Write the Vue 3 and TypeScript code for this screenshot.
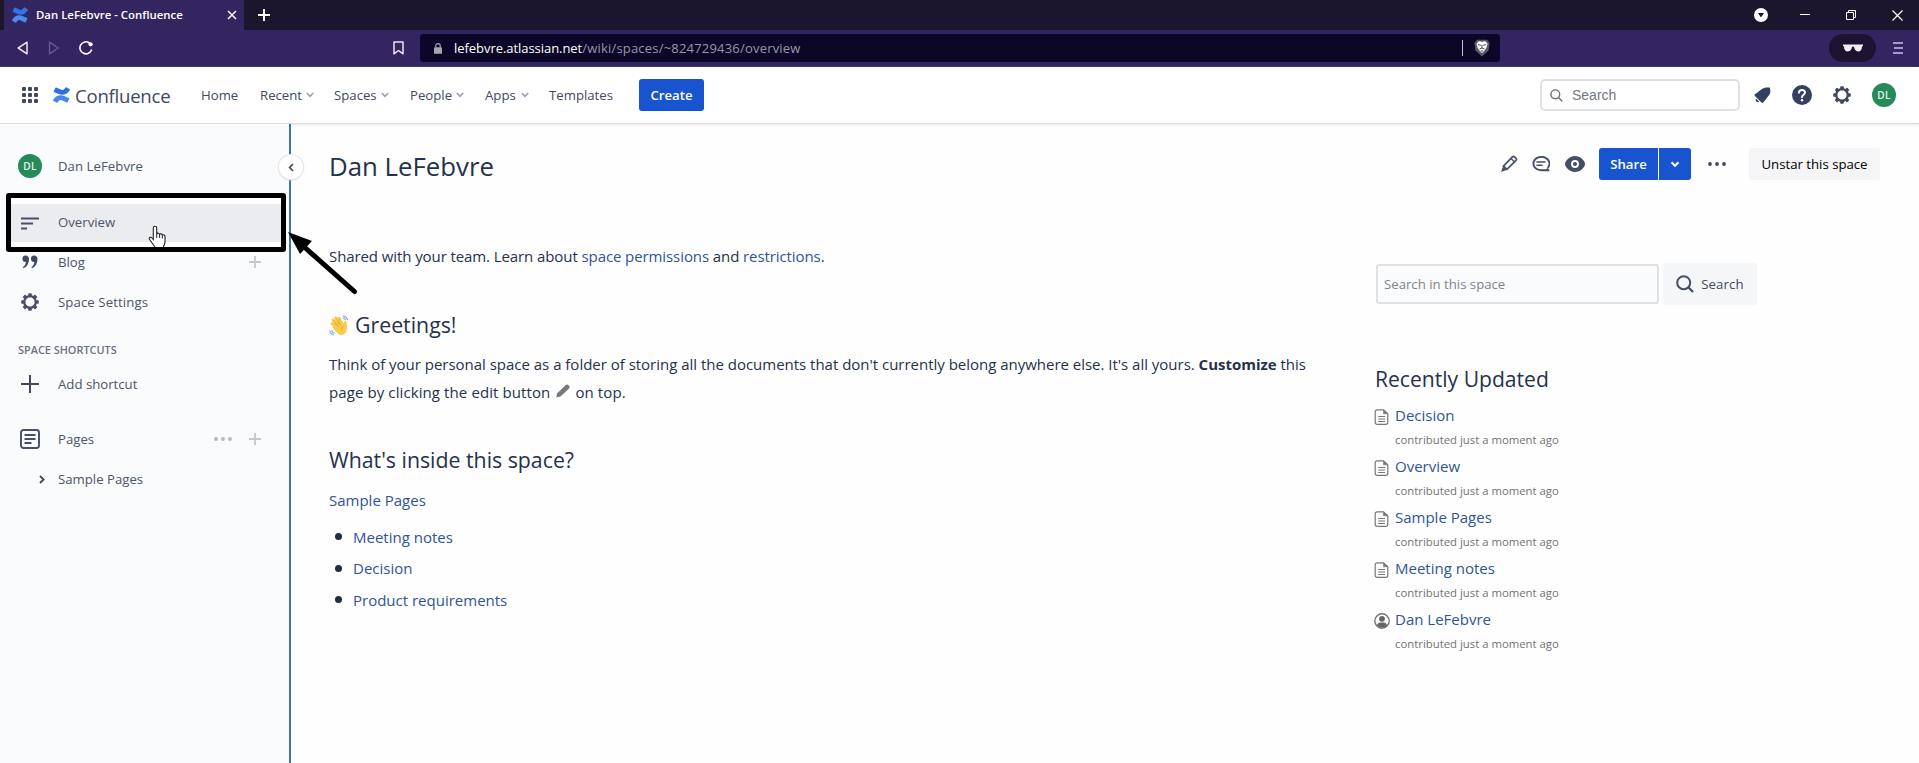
<script setup lang="ts">
interface NavItem { label: string; menu: boolean; cls: string }
interface Update { title: string; kind: 'page' | 'person' }

const nav: NavItem[] = [
  { label: 'Home', menu: false, cls: 'home' },
  { label: 'Recent', menu: true, cls: 'recent' },
  { label: 'Spaces', menu: true, cls: 'spaces' },
  { label: 'People', menu: true, cls: 'people' },
  { label: 'Apps', menu: true, cls: 'apps' },
  { label: 'Templates', menu: false, cls: 'templates' },
]
const pages: string[] = ['Meeting notes', 'Decision', 'Product requirements']
const updates: Update[] = [
  { title: 'Decision', kind: 'page' },
  { title: 'Overview', kind: 'page' },
  { title: 'Sample Pages', kind: 'page' },
  { title: 'Meeting notes', kind: 'page' },
  { title: 'Dan LeFebvre', kind: 'person' },
]
const gearTeeth: number[] = [0, 45, 90, 135, 180, 225, 270, 315]
const gridDots: number[] = [0, 1, 2, 3, 4, 5, 6, 7, 8]
const logoLower = 'M.87 18.257c-.248.382-.53.875-.763 1.245a.764.764 0 0 0 .255 1.04l4.965 3.054a.764.764 0 0 0 1.058-.26c.199-.332.454-.763.733-1.221 1.967-3.247 3.945-2.853 7.508-1.146l4.957 2.337a.764.764 0 0 0 1.028-.382l2.364-5.346a.764.764 0 0 0-.382-1 599.851 599.851 0 0 1-4.965-2.361C10.911 10.97 5.224 11.185.87 18.257z'
const logoUpper = 'M23.131 5.743c.249-.405.531-.875.764-1.25a.764.764 0 0 0-.256-1.034L18.675.404a.764.764 0 0 0-1.058.26c-.195.335-.451.763-.734 1.225-1.966 3.246-3.945 2.85-7.508 1.146L4.437.694a.764.764 0 0 0-1.027.382L1.046 6.422a.764.764 0 0 0 .382 1c1.039.49 3.105 1.467 4.965 2.361 6.698 3.246 12.392 3.029 16.738-4.04z'
</script>

<template>
  <div class="window">
    <header class="tabs">
      <div class="tab">
        <svg class="tab-logo" viewBox="0 0 24 24"><path :d="logoLower" fill="#4a8bf2" /><path :d="logoUpper" fill="#2f74e8" /></svg>
        <span class="tab-title">Dan LeFebvre - Confluence</span>
        <svg class="tab-x" viewBox="0 0 10 10"><path d="M1 1L9 9M9 1L1 9" stroke="#fff" stroke-width="1.500" /></svg>
      </div>
      <svg class="tab-plus" viewBox="0 0 12 12"><path d="M6 0V12M0 6H12" stroke="#fff" stroke-width="2" /></svg>
      <div class="win-ctl">
        <svg width="14" height="14" viewBox="0 0 14 14"><circle cx="7" cy="7" r="7" fill="#fff" /><path d="M4 5H10L7 9.500Z" fill="#1b162e" /></svg>
        <svg width="10" height="10" viewBox="0 0 10 10"><path d="M0 4.500H10" stroke="#fff" /></svg>
        <svg width="10" height="10" viewBox="0 0 10 10"><path d="M.5 2.500H7.500V9.500H.5ZM2.500 2.500V.5H9.500V7.500H7.500" fill="none" stroke="#fff" /></svg>
        <svg width="11" height="11" viewBox="0 0 11 11"><path d="M.5.5L10.500 10.500M10.500.5L.5 10.500" stroke="#fff" stroke-width="1.200" /></svg>
      </div>
    </header>

    <div class="toolbar">
      <svg class="t-back" width="12" height="14" viewBox="0 0 12 14"><path d="M10 1.200V12.800L1.200 7Z" fill="none" stroke="#e9e5f5" stroke-width="1.500" stroke-linejoin="round" /></svg>
      <svg class="t-fwd" width="12" height="14" viewBox="0 0 12 14"><path d="M1.500 1.200V12.800L10.300 7Z" fill="none" stroke="#665a90" stroke-width="1.400" stroke-linejoin="round" /></svg>
      <svg class="t-reload" width="14" height="14" viewBox="0 0 14 14"><path d="M10.500 2A6 6 0 1 0 12.700 8.500" fill="none" stroke="#fff" stroke-width="1.600" /><circle cx="11.600" cy="3.300" r="2.100" fill="#fff" /></svg>
      <svg class="t-mark" width="11" height="14" viewBox="0 0 11 14"><path d="M1 1H10V12.800L5.500 9.500L1 12.800Z" fill="none" stroke="#e9e5f5" stroke-width="1.500" stroke-linejoin="round" /></svg>
      <div class="url">
        <svg class="lock" width="8" height="11" viewBox="0 0 9 12"><rect y="4.500" width="9" height="7.500" rx="1" fill="#a7a5b5" /><path d="M2 5V3A2.500 2.500 0 0 1 7 3V5" fill="none" stroke="#a7a5b5" stroke-width="1.300" /></svg>
        <span class="host">lefebvre.atlassian.net</span><span class="path">/wiki/spaces/~824729436/overview</span>
        <i class="url-div"></i>
        <svg class="brave" width="16" height="18" viewBox="0 0 16 18"><path d="M3 .8H13L15.600 4L14.500 11.500L8 17.600L1.500 11.500L.4 4Z" fill="#5c5866" /><path d="M4 2.800L6 2.300L8 3L10 2.300L12 2.800L13.500 5L12.300 9L10.200 12L8 14L5.800 12L3.700 9L2.500 5Z" fill="#fff" /><path d="M4 5.500L7 6.300M12 5.500L9 6.300M8 6V9M5.500 10L8 9L10.500 10M6.700 12H9.300" stroke="#4b4758" fill="none" /></svg>
      </div>
      <div class="private"><svg width="20" height="8" viewBox="0 0 20 8"><path d="M0 .5H20V2L19 2.500C19 6 17.500 7.500 15 7.500C12.500 7.500 11.500 5.500 11 2.800H9C8.500 5.500 7.500 7.500 5 7.500C2.500 7.500 1 6 1 2.500L0 2Z" fill="#f1eef8" /></svg></div>
      <svg class="burger" width="10" height="12" viewBox="0 0 10 12"><path d="M0 1H10M1 6H10M0 11H10" stroke="#c9c0ee" stroke-width="1.700" /></svg>
    </div>

    <nav class="topnav">
      <div class="grid9"><i v-for="d in gridDots" :key="d"></i></div>
      <svg class="c-logo" viewBox="0 0 24 24" preserveAspectRatio="none"><path :d="logoLower" fill="#4488ee" /><path :d="logoUpper" fill="#2f70dd" /></svg>
      <span class="brand">Confluence</span>
      <div class="links">
        <span v-for="n in nav" :key="n.label" class="nav-item" :class="n.cls">
          <span>{{ n.label }}</span>
          <svg v-if="n.menu" width="8" height="6" viewBox="0 0 8 6"><path d="M.8 1L4 4.400L7.200 1" fill="none" stroke="#9aa0ac" stroke-width="1.600" /></svg>
        </span>
      </div>
      <button class="create">Create</button>
      <div class="nav-search">
        <svg width="13" height="13" viewBox="0 0 13 13"><circle cx="5.300" cy="5.300" r="4.400" fill="none" stroke="#6b7078" stroke-width="1.400" /><path d="M8.500 8.500L12.200 12.200" stroke="#6b7078" stroke-width="1.500" /></svg>
        <span>Search</span>
      </div>
      <svg class="bell" width="17" height="17" viewBox="0 0 17 17"><path d="M15.800.6C16.600 3 16.800 6.500 15 8.300L9.300 15.600C8.600 16.300 8 16.100 7.500 15.600L.9 9C.4 8.400.4 7.800 1 7.300L8.300 1.700C10.500.3 13.300.2 15.800.6Z" fill="#344060" /><path d="M2 11.500A2.400 2.400 0 0 0 5.300 14.800Z" fill="#344060" /></svg>
      <svg class="help" width="20" height="20" viewBox="0 0 20 20"><circle cx="10" cy="10" r="10" fill="#344060" /><path d="M7 7.800C7 4 13 4.200 13 7.600C13 9.800 10 9.700 10 12.200" fill="none" stroke="#fff" stroke-width="1.900" stroke-linecap="round" /><circle cx="10" cy="15.200" r="1.200" fill="#fff" /></svg>
      <svg class="gear" width="18" height="18" viewBox="0 0 18 18"><g fill="#42495c"><rect v-for="a in gearTeeth" :key="a" x="7.200" y=".2" width="3.600" height="4" rx=".8" :transform="`rotate(${a} 9 9)`" /></g><circle cx="9" cy="9" r="5.800" fill="none" stroke="#42495c" stroke-width="2.200" /></svg>
      <span class="avatar">DL</span>
    </nav>

    <div class="body">
      <aside class="side">
        <div class="s-row s-user"><span class="s-ico"><span class="avatar">DL</span></span><span class="lbl name">Dan LeFebvre</span></div>
        <div class="s-row s-over">
          <span class="s-ico"><svg width="18" height="13" viewBox="0 0 18 13"><path d="M0 1.500H18M0 6.500H12M0 11.500H6" stroke="#484f66" stroke-width="2" /></svg></span>
          <span class="lbl">Overview</span>
        </div>
        <div class="s-row s-blog">
          <span class="s-ico"><svg width="16" height="14" viewBox="0 0 16 14"><path d="M3.500.5A3.300 3.300 0 0 1 7 4C7 8.500 5 11.500 1.700 13.300L.8 12.300C2.700 11 3.700 9 3.900 7A3.250 3.250 0 1 1 3.500.5Z" fill="#42495f" /><path d="M12 .5A3.300 3.300 0 0 1 15.500 4C15.500 8.500 13.500 11.500 10.200 13.300L9.300 12.300C11.200 11 12.200 9 12.400 7A3.250 3.250 0 1 1 12 .5Z" fill="#42495f" /></svg></span>
          <span class="lbl">Blog</span>
          <svg class="add" width="12" height="12" viewBox="0 0 12 12"><path d="M6 0V12M0 6H12" stroke="#c3c6cc" stroke-width="1.800" /></svg>
        </div>
        <div class="s-row">
          <span class="s-ico"><svg width="18" height="18" viewBox="0 0 18 18"><g fill="#484f66"><rect v-for="a in gearTeeth" :key="a" x="7.200" y=".2" width="3.600" height="4" rx=".8" :transform="`rotate(${a} 9 9)`" /></g><circle cx="9" cy="9" r="5.800" fill="none" stroke="#484f66" stroke-width="2.200" /></svg></span>
          <span class="lbl settings">Space Settings</span>
        </div>
        <div class="s-head">SPACE SHORTCUTS</div>
        <div class="s-row s-add">
          <span class="s-ico"><svg width="18" height="18" viewBox="0 0 18 18"><path d="M9 0V18M0 9H18" stroke="#42495a" stroke-width="2" /></svg></span>
          <span class="lbl">Add shortcut</span>
        </div>
        <div class="s-row s-pages">
          <span class="s-ico"><svg width="20" height="20" viewBox="0 0 20 20"><rect x="1" y="1" width="18" height="18" rx="2.500" fill="none" stroke="#484f66" stroke-width="1.900" /><path d="M4.500 6H15.500M4.500 10H15.500M4.500 14H11.500" stroke="#484f66" stroke-width="1.800" /></svg></span>
          <span class="lbl">Pages</span>
          <svg class="more" width="18" height="4" viewBox="0 0 18 4"><g fill="#b4b7be"><circle cx="2" cy="2" r="1.900" /><circle cx="9" cy="2" r="1.900" /><circle cx="16" cy="2" r="1.900" /></g></svg>
          <svg class="add" width="12" height="12" viewBox="0 0 12 12"><path d="M6 0V12M0 6H12" stroke="#c3c6cc" stroke-width="1.800" /></svg>
        </div>
        <div class="s-row s-tree">
          <span class="s-ico"><svg width="6" height="9" viewBox="0 0 6 9"><path d="M1 1L4.600 4.500L1 8" fill="none" stroke="#42495f" stroke-width="1.900" /></svg></span>
          <span class="lbl">Sample Pages</span>
        </div>
        <span class="collapse"><svg width="6" height="9" viewBox="0 0 6 9"><path d="M5 1L1.600 4.500L5 8" fill="none" stroke="#42495f" stroke-width="1.700" /></svg></span>
      </aside>

      <main class="main">
        <div class="page-head">
          <h1>Dan LeFebvre</h1>
          <div class="actions">
            <svg class="a-edit" width="18" height="18" viewBox="0 0 18 18"><path d="M3.500 11.200L12.400 1.800Q13.500.8 14.700 1.900L15.900 3Q17 4.200 16 5.300L6.900 14.400Z" fill="none" stroke="#464e63" stroke-width="1.700" /><path d="M3 11.500L6.500 15L1 17Z" fill="#464e63" /><path d="M11 3.500L14.500 7" stroke="#464e63" stroke-width="1.300" /></svg>
            <svg class="a-comment" width="18" height="17" viewBox="0 0 18 17"><path d="M15.600 11.900A8 6.700 0 1 0 9 14.300H16.500L14.700 12.600" fill="none" stroke="#464e63" stroke-width="1.900" stroke-linejoin="round" /><path d="M5 6H13M5 9.300H10" stroke="#464e63" stroke-width="1.600" stroke-linecap="round" /></svg>
            <svg class="a-eye" width="20" height="16" viewBox="0 0 20 16"><path d="M10 0C15 0 20 4.500 20 8S15 16 10 16S0 11.500 0 8S5 0 10 0Z" fill="#464e63" /><circle cx="10" cy="8" r="3" fill="none" stroke="#fff" stroke-width="1.900" /></svg>
            <button class="share">Share</button>
            <button class="share-more"><svg width="10" height="7" viewBox="0 0 10 7"><path d="M1.500 1.300L5 4.800L8.500 1.300" fill="none" stroke="#fff" stroke-width="2" /></svg></button>
            <svg class="a-more" width="18" height="4" viewBox="0 0 18 4"><g fill="#42495c"><circle cx="2" cy="2" r="1.900" /><circle cx="9" cy="2" r="1.900" /><circle cx="16" cy="2" r="1.900" /></g></svg>
            <button class="unstar">Unstar this space</button>
          </div>
        </div>

        <div class="cols">
          <article>
            <p class="shared">Shared with your team. Learn about <a>space permissions</a> and <a>restrictions</a>.</p>
            <h2 class="greet">
              <svg width="20" height="21" viewBox="0 0 20 21"><g stroke="#f6c544" stroke-width="2.700" stroke-linecap="round"><path d="M9 14L3 8.500M10 12L4 5M12 11L6.500 2.800M14 11L10 3.200" /></g><path d="M6 10L14 7.500L15 8.500C14.700 6.500 15.500 5 17 5.500C18 8 18.700 13 17.500 16C16.500 19.500 12.500 21 9.500 19C7.500 17.500 4.500 14 3.500 12Z" fill="#fccb4b" /><path d="M6 8L10 12.500M8.500 6L12 11M12.500 16C12 13.500 13 12 15 11" stroke="#dfa12b" stroke-width=".8" fill="none" /><g stroke="#7fa9dc" stroke-width="1.200" fill="none"><path d="M14 1Q17.500 1.500 18.800 5M13.500 3Q15.500 3 16.800 5M.8 15.500Q1.200 19 5 20M2.700 15.500Q3.200 17.500 5.500 18.300" /></g></svg>
              <span>Greetings!</span>
            </h2>
            <p class="intro">Think of your personal space as a folder of storing all the documents that don't currently belong anywhere else. It's all yours. <b>Customize</b> this<br><span class="line2">page by clicking the edit button <svg class="pen" width="14" height="14" viewBox="0 0 14 14"><path d="M1 9.500L9.500 1.200Q10.800 0 12.300 1L13.300 2.300Q14 3.500 13 4.500L4.500 12.600L.4 13.600Z" fill="#77797c" /></svg> on top.</span></p>
            <h2 class="inside">What's inside this space?</h2>
            <p class="root"><a>Sample Pages</a></p>
            <ul><li v-for="p in pages" :key="p"><a>{{ p }}</a></li></ul>
          </article>

          <section class="right">
            <div class="find">
              <div class="field">Search in this space</div>
              <button class="find-btn">
                <svg width="18" height="18" viewBox="0 0 18 18"><circle cx="7.700" cy="7.700" r="6.500" fill="none" stroke="#464e63" stroke-width="2" /><path d="M12.300 12.300L17 17" stroke="#464e63" stroke-width="2.300" /></svg>
                <span>Search</span>
              </button>
            </div>
            <h2 class="recent-h">Recently Updated</h2>
            <div v-for="u in updates" :key="u.title" class="upd">
              <svg v-if="u.kind === 'page'" width="16" height="16" viewBox="0 0 16 16"><path d="M4 .8H9.500L13.800 4.800V13.200Q13.800 15.300 11.700 15.300H3.300Q1.200 15.300 1.200 13.200V2.900Q1.200.8 3.300.8Z" fill="none" stroke="#777" stroke-width="1.200" /><path d="M9.500 1V4.800H13.500Z" fill="#777" stroke="#777" stroke-width=".6" /><path d="M4.200 7.500H11M4.200 10H11M4.200 12.500H11" stroke="#777" stroke-width="1.100" /></svg>
              <svg v-else width="16" height="16" viewBox="0 0 16 16"><circle cx="8" cy="8" r="7.200" fill="none" stroke="#777" stroke-width="1.400" /><circle cx="8" cy="5.800" r="2.900" fill="#666" /><path d="M3 12.500C3.500 9.800 5.500 9.500 8 9.500S12.500 9.800 13 12.500Q8 17 3 12.500Z" fill="#666" /></svg>
              <div><a>{{ u.title }}</a><small>contributed just a moment ago</small></div>
            </div>
          </section>
        </div>
      </main>
    </div>

    <svg class="cursor" width="20" height="25" viewBox="0 0 20 25"><path d="M7 1.200C8.200 1.200 8.700 2 8.700 3V9C9 7.800 11.300 7.900 11.600 9.300C12.300 8.500 14 8.800 14.300 10C15.300 9.300 17 10 17 11.500V16C17 19 16 20.500 15.300 22V24H7V22C5 19.500 3 16.500 1.300 14C.7 12.500 2.800 11.500 4 13L5.300 14.500V3C5.300 2 5.800 1.200 7 1.200Z" fill="#fff" stroke="#222" stroke-width="1.100" /><path d="M8.700 8.500V13M11.600 9.500V13M14.300 10.500V13.500" stroke="#222" stroke-width="1" /></svg>
    <div class="frame"></div>
    <svg class="arrow" width="72" height="66" viewBox="0 0 72 66"><path d="M14 13L66.500 59.500" stroke="#000" stroke-width="5" stroke-linecap="round" /><path d="M0 0L24 9L12 22Z" fill="#000" /></svg>
  </div>
</template>

<style>
body { margin: 0; overflow: hidden; }
</style>

<style scoped>
.window { position: relative; width: 1919px; height: 763px; overflow: hidden; background: #fefefe; font-family: "Open Sans", "Noto Sans", sans-serif; color: #25324c; }
svg { display: block; flex: none; }
button { border: 0; padding: 0; margin: 0; font: inherit; display: flex; align-items: center; justify-content: center; }
h1, h2, p, ul { margin: 0; padding: 0; font-weight: 400; }
a { color: #2f5597; }

.tabs { display: flex; align-items: center; height: 30px; background: #1b162e; padding-left: 4px; }
.tab { display: flex; align-items: center; width: 240px; height: 30px; background: #33255f; color: #fff; box-sizing: border-box; padding: 0 7px 0 8px; }
.tab-logo { width: 16px; height: 16px; }
.tab-title { margin: -1px 0 0 8px; font-size: 11.400px; font-weight: 600; white-space: nowrap; }
.tab-x { width: 10px; height: 10px; margin-left: auto; }
.tab-plus { width: 12px; height: 12px; margin-left: 14px; }
.win-ctl { display: flex; align-items: center; margin-left: auto; margin-right: 16px; }
.win-ctl svg:nth-child(2) { margin-left: 32px; }
.win-ctl svg:nth-child(3) { margin-left: 36px; }
.win-ctl svg:nth-child(4) { margin-left: 36px; }

.toolbar { display: flex; align-items: center; height: 36px; padding-bottom: 1px; background: #33255f; }
.t-back { margin-left: 17px; }
.t-fwd { margin-left: 19px; }
.t-reload { margin-left: 19px; }
.t-mark { margin-left: 300px; }
.url { display: flex; align-items: center; width: 1080px; height: 28px; margin-left: 16px; border-radius: 3px; background: #0c0628; box-sizing: border-box; font-size: 13px; white-space: nowrap; }
.lock { margin-left: 14px; }
.host { margin-left: 12px; color: #fff; letter-spacing: -.05px; }
.path { color: #9996a8; letter-spacing: .2px; }
.url-div { width: 1px; height: 16px; background: #c5c2d0; margin-left: auto; }
.brave { margin: 0 10px 0 11px; }
.private { display: flex; align-items: center; justify-content: center; width: 47px; height: 28px; border-radius: 14px; background: #1b1331; margin-left: auto; }
.burger { margin: 0 16px 0 17px; }

.topnav { display: flex; align-items: center; height: 56px; background: #fff; border-bottom: 1px solid #dcdee2; box-shadow: 0 1px 2px #e6e8ec; position: relative; font-size: 13.200px; font-weight: 500; color: #42495c; }
.grid9 { display: grid; grid-template-columns: repeat(3, 4px); gap: 2px; margin-left: 22px; }
.grid9 i { width: 4px; height: 4px; border-radius: 1px; background: #42495c; }
.c-logo { width: 17px; height: 16px; margin-left: 15px; }
.brand { width: 95px; margin-left: 5px; font-size: 18.600px; font-weight: 400; letter-spacing: -.25px; white-space: nowrap; }
.links { display: flex; align-items: center; margin-left: 31px; }
.nav-item { display: flex; align-items: center; justify-content: space-between; white-space: nowrap; }
.home { width: 38px; }
.recent { width: 54px; margin-left: 21px; }
.spaces { width: 55px; margin-left: 20px; }
.people { width: 54px; margin-left: 21px; }
.apps { width: 44px; margin-left: 21px; }
.templates { width: 64px; margin-left: 20px; }
.create { width: 65px; height: 32px; margin-left: 26px; border-radius: 3px; background: #1854cf; color: #fff; font-weight: 600; }
.nav-search { display: flex; align-items: center; width: 200px; height: 32px; box-sizing: border-box; border: 2px solid #dfe1e5; border-radius: 5px; margin-left: 836px; padding-left: 8px; font-family: "Liberation Sans", Arial, sans-serif; font-size: 14px; font-weight: 400; color: #737780; }
.nav-search span { margin-left: 9px; }
.bell { margin-left: 14px; }
.help { margin-left: 21px; }
.gear { margin-left: 21px; }
.avatar { display: flex; align-items: center; justify-content: center; width: 24px; height: 24px; border-radius: 50%; background: #278a5b; color: #e9f5ee; font-size: 10px; font-weight: 600; letter-spacing: .3px; }
.topnav .avatar { margin-left: 21px; }

.body { display: flex; height: 639px; }
.side { position: relative; width: 291px; height: 639px; box-sizing: border-box; background: #fafbfc; border-right: 2px solid #3b74a5; padding-top: 22px; font-size: 13.200px; color: #4c5466; }
.s-row { display: flex; align-items: center; height: 40px; padding-left: 18px; }
.s-ico { display: flex; justify-content: center; width: 24px; margin-right: 16px; }
.lbl { white-space: nowrap; flex: 1; }
.name { font-weight: 500; letter-spacing: .05px; }
.settings { letter-spacing: .1px; }
.s-over { width: 263px; height: 38px; margin: 18px 0 0 11px; padding-left: 7px; background: #ebecf0; box-shadow: 0 -5px #fff, 0 5px #fff; }
.s-over .lbl { margin-top: -2px; }
.add { margin-right: 28px; }
.more { margin-right: 17px; }
.s-head { height: 20px; line-height: 20px; margin-top: 18px; padding-left: 18px; font-size: 10.900px; font-weight: 600; color: #6b7280; }
.s-add { margin-top: 4px; }
.s-pages { margin-top: 15px; }
.s-tree .s-ico { width: 12px; padding-left: 18px; margin-right: 10px; }
.collapse { position: absolute; left: 279px; top: 31px; width: 24px; height: 24px; border-radius: 50%; background: #fff; box-shadow: 0 0 0 1px #e4e6ea, 0 1px 3px #d5d8de; display: flex; align-items: center; justify-content: center; }

.main { flex: 1; padding: 0 39px 0 38px; }
.page-head { display: flex; align-items: flex-start; justify-content: space-between; height: 94px; padding-top: 24px; }
h1 { margin-top: 2px; font-size: 25.800px; line-height: 32px; }
.actions { display: flex; align-items: center; height: 32px; font-size: 13.200px; font-weight: 500; color: #42495c; }
.a-comment { margin-left: 14px; }
.a-eye { margin-left: 15px; }
.share { width: 59px; height: 32px; margin-left: 14px; border-radius: 3px 0 0 3px; background: #1854cf; color: #fff; font-weight: 600; }
.share-more { width: 32px; height: 32px; margin-left: 1px; border-radius: 0 3px 3px 0; background: #1854cf; }
.a-more { margin-left: 17px; }
.unstar { width: 131px; height: 32px; margin-left: 23px; border-radius: 3px; background: #f5f5f7; }

.cols { display: grid; grid-template-columns: 1046px 1fr; font-size: 15px; }
article { line-height: 28px; }
h2 { font-size: 21.300px; line-height: 32px; }
.shared { letter-spacing: -.09px; }
.greet { display: flex; align-items: center; gap: 6px; margin-top: 39px; }
.intro { margin-top: 9px; white-space: nowrap; letter-spacing: -.015px; }
.line2 { letter-spacing: .1px; }
.pen { display: inline-block; margin: 0 1px 0 2px; }
.inside { margin-top: 38px; }
.root { margin-top: 10px; }
ul { list-style: none; margin-top: 7px; }
li { display: flex; align-items: center; height: 31.500px; }
li::before { content: ""; width: 7px; height: 7px; border-radius: 50%; background: #202c47; margin: 0 11px 0 6px; }
.right { padding-top: 21px; }
.find { display: flex; align-items: center; font-size: 13.200px; }
.field { width: 283px; height: 40px; line-height: 37px; box-sizing: border-box; border: 2px solid #dfe1e5; border-radius: 3px; background: #fafbfc; margin-left: 1px; padding-left: 6px; color: #7f858f; }
.find-btn { width: 94px; height: 42px; margin-left: 4px; background: #f5f6f8; border-radius: 3px; color: #42495c; font-weight: 500; gap: 7px; }
.find-btn span { margin-top: -1px; letter-spacing: .15px; }
.recent-h { margin: 58px 0 7px; font-size: 21.100px; }
.upd { display: flex; height: 51px; }
.upd svg { margin: 7px 5px 0 -1px; }
.upd a { display: block; line-height: 26px; }
.upd small { display: block; font-size: 11.350px; line-height: 24px; color: #737373; }

.cursor { position: absolute; left: 148px; top: 225px; }
.frame { position: absolute; left: 6px; top: 193px; width: 280px; height: 59px; box-sizing: border-box; border: 5px solid #000; border-radius: 3px; }
.arrow { position: absolute; left: 288px; top: 232px; }
</style>
